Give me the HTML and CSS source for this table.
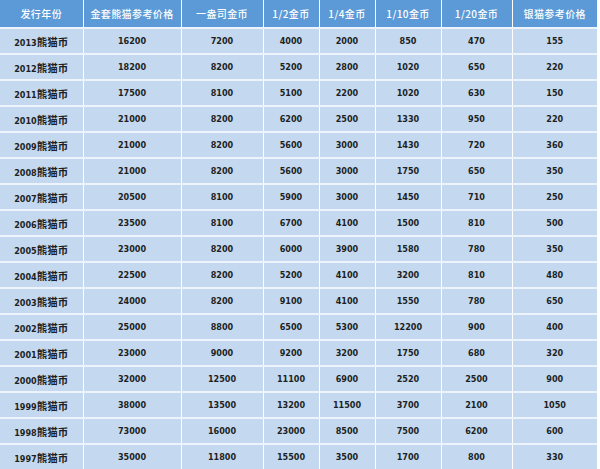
FILE: index.html
```html
<!DOCTYPE html>
<html lang="zh">
<head>
<meta charset="utf-8">
<title>熊猫币参考价格</title>
<link rel="stylesheet" href="styles.css">
</head>
<body>
<table class="prices">
  <colgroup>
    <col class="c1"><col class="c2"><col class="c3"><col class="c4"><col class="c5"><col class="c6"><col class="c7"><col class="c8">
  </colgroup>
  <thead>
    <tr><th>发行年份</th><th>金套熊猫参考价格</th><th>一盎司金币</th><th>1/2金币</th><th>1/4金币</th><th>1/10金币</th><th>1/20金币</th><th>银猫参考价格</th></tr>
  </thead>
  <tbody>
    <tr><td>2013<span class="cn">熊猫币</span></td><td>16200</td><td>7200</td><td>4000</td><td>2000</td><td>850</td><td>470</td><td>155</td></tr>
    <tr><td>2012<span class="cn">熊猫币</span></td><td>18200</td><td>8200</td><td>5200</td><td>2800</td><td>1020</td><td>650</td><td>220</td></tr>
    <tr><td>2011<span class="cn">熊猫币</span></td><td>17500</td><td>8100</td><td>5100</td><td>2200</td><td>1020</td><td>630</td><td>150</td></tr>
    <tr><td>2010<span class="cn">熊猫币</span></td><td>21000</td><td>8200</td><td>6200</td><td>2500</td><td>1330</td><td>950</td><td>220</td></tr>
    <tr><td>2009<span class="cn">熊猫币</span></td><td>21000</td><td>8200</td><td>5600</td><td>3000</td><td>1430</td><td>720</td><td>360</td></tr>
    <tr><td>2008<span class="cn">熊猫币</span></td><td>21000</td><td>8200</td><td>5600</td><td>3000</td><td>1750</td><td>650</td><td>350</td></tr>
    <tr><td>2007<span class="cn">熊猫币</span></td><td>20500</td><td>8100</td><td>5900</td><td>3000</td><td>1450</td><td>710</td><td>250</td></tr>
    <tr><td>2006<span class="cn">熊猫币</span></td><td>23500</td><td>8100</td><td>6700</td><td>4100</td><td>1500</td><td>810</td><td>500</td></tr>
    <tr><td>2005<span class="cn">熊猫币</span></td><td>23000</td><td>8200</td><td>6000</td><td>3900</td><td>1580</td><td>780</td><td>350</td></tr>
    <tr><td>2004<span class="cn">熊猫币</span></td><td>22500</td><td>8200</td><td>5200</td><td>4100</td><td>3200</td><td>810</td><td>480</td></tr>
    <tr><td>2003<span class="cn">熊猫币</span></td><td>24000</td><td>8200</td><td>9100</td><td>4100</td><td>1550</td><td>780</td><td>650</td></tr>
    <tr><td>2002<span class="cn">熊猫币</span></td><td>25000</td><td>8800</td><td>6500</td><td>5300</td><td>12200</td><td>900</td><td>400</td></tr>
    <tr><td>2001<span class="cn">熊猫币</span></td><td>23000</td><td>9000</td><td>9200</td><td>3200</td><td>1750</td><td>680</td><td>320</td></tr>
    <tr><td>2000<span class="cn">熊猫币</span></td><td>32000</td><td>12500</td><td>11100</td><td>6900</td><td>2520</td><td>2500</td><td>900</td></tr>
    <tr><td>1999<span class="cn">熊猫币</span></td><td>38000</td><td>13500</td><td>13200</td><td>11500</td><td>3700</td><td>2100</td><td>1050</td></tr>
    <tr><td>1998<span class="cn">熊猫币</span></td><td>73000</td><td>16000</td><td>23000</td><td>8500</td><td>7500</td><td>6200</td><td>600</td></tr>
    <tr><td>1997<span class="cn">熊猫币</span></td><td>35000</td><td>11800</td><td>15500</td><td>3500</td><td>1700</td><td>800</td><td>330</td></tr>
  </tbody>
</table>
</body>
</html>
```

FILE: styles.css
```css
html, body {
  margin: 0;
  padding: 0;
  background: #ffffff;
}

.prices {
  width: 597px;
  table-layout: fixed;
  border-collapse: collapse;
  font-family: "DejaVu Sans Condensed", "DejaVu Sans", "Noto Sans CJK SC", sans-serif;
}

.c1 { width: 83px; }
.c2 { width: 98px; }
.c3 { width: 82px; }
.c4 { width: 56px; }
.c5 { width: 56px; }
.c6 { width: 66px; }
.c7 { width: 71px; }
.c8 { width: 85px; }

.prices th,
.prices td {
  padding: 0;
  text-align: center;
  white-space: nowrap;
  overflow: hidden;
  border-left: 1px solid #ffffff;
}

.prices th:first-child,
.prices td:first-child {
  border-left: none;
}

.prices th {
  height: 27px;
  background: #5b9ad6;
  color: #ffffff;
  font-family: "Noto Sans CJK SC", sans-serif;
  font-weight: 500;
  font-size: 10px;
  letter-spacing: 0.4px;
}

.prices td {
  height: 24px;
  background: #c4d9ef;
  color: #1d1f24;
  font-weight: bold;
  font-size: 9px;
  border-top: 2px solid #ecf3fa;
}

.prices .cn {
  font-family: "Noto Sans CJK SC", sans-serif;
  font-size: 10.5px;
  font-weight: bold;
}
```
